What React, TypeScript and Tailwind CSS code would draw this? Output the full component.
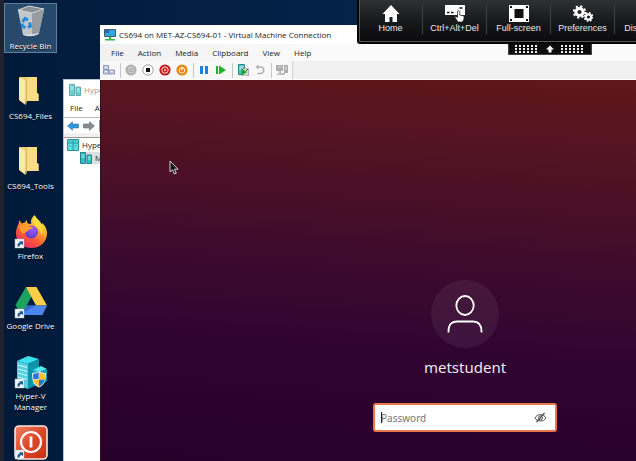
import type { ReactNode } from 'react';
import clsx from 'clsx';

/* Desktop icons */

const ShortcutArrow = () => (
  <g>
    <rect x="1" y="24" width="9" height="9" fill="#f5f8fb" stroke="#9fb0c0" strokeWidth=".5" />
    <path d="M3.400 31.600c-.2-2.600.9-4 2.700-4.300L5 26.200h4v4l-1.200-1.200c-1.400.2-2.300 1-2.200 2.600z" fill="#1d5a9c" />
  </g>
);

const RecycleBinIcon = () => (
  <svg viewBox="0 0 34 34" className="size-[34px]">
    <path d="M4 5 L9 29 Q15 32 21 30 L25 28 L30 5 L20 8z" fill="#a9adb2" />
    <path d="M4 5 L18 8 L18 31 Q12 31 9 29z" fill="#c4c7ca" />
    <path d="M18 8 L30 5 L25 28 L18 31z" fill="#979ca2" />
    <path d="M4 5 L15 1 L30 4 L18 8z" fill="#8b9096" stroke="#d5d8da" strokeWidth="1" strokeLinejoin="round" />
    <path d="M9 29 Q15 31 25 28 L25 29 Q17 33 9 30z" fill="#e1e3e5" />
    <g fill="none" stroke="#2389dc" strokeWidth="3">
      <path d="M8.500 17 L11 13.500 L14 15" />
      <path d="M15.500 17.500 L16.500 21 L14 22.500" />
      <path d="M11.500 22.500 L8.500 21.500 L8 18.500" />
    </g>
  </svg>
);

const FolderIcon = () => (
  <svg viewBox="0 0 34 34" className="size-[34px]">
    <path d="M6 2h17v16l1.500 1v7H6z" fill="#f4d67a" />
    <path d="M13 2h10v16l1.500 1v7H13z" fill="#f8dd86" />
    <path d="M5 2l6.500 3v25l-6.500-5z" fill="#fbe9a6" />
    <path d="M11.500 5v25l1.500-3V4z" fill="#dcb856" />
    <path d="M5 2h8v2l-1.500 1z" fill="#ecca69" />
  </svg>
);

const FirefoxIcon = () => (
  <svg viewBox="0 0 34 34" className="size-[34px]">
    <defs>
      <linearGradient id="fox" x1=".8" y1="0" x2=".2" y2="1">
        <stop offset="0" stopColor="#fff04a" />
        <stop offset=".35" stopColor="#ffb12c" />
        <stop offset=".65" stopColor="#ff5a37" />
        <stop offset="1" stopColor="#f0246d" />
      </linearGradient>
      <radialGradient id="globe" cx=".6" cy=".3" r=".8">
        <stop offset="0" stopColor="#a259f5" />
        <stop offset="1" stopColor="#4f3cc4" />
      </radialGradient>
    </defs>
    <path
      d="M20.500 0c1 3 4.500 4.500 6.500 8l1 1.500.5-1.500c3 3 4.500 7 4.500 10.500C33 27 26 33 17.500 33S2 27 2 18.500c0-3.500 1-7 2.500-9.500l1-4 2 3.500c1-.5 2-.8 3-.8l2-2.700c.5 2 1 3 2 4l3-.5C16 5 18.500 2 20.500 0z"
      fill="url(#fox)"
    />
    <path d="M21 .5c1 3 4 5 6 8.500 2 4 2 8 .5 12-1-7-4-8-7-11-2-2.500-1.500-6 .5-9.500z" fill="#ffdf3f" opacity=".85" />
    <circle cx="17.500" cy="17" r="6.500" fill="url(#globe)" />
    <path d="M6 11c3-1.500 7-1 9 .5l4 .5c-.5 2-3 2.500-5 3 0 2-3 2-4 4C7 18 5 15 6 11z" fill="#ff9a2b" />
    <ShortcutArrow />
  </svg>
);

const DriveIcon = () => (
  <svg viewBox="0 0 34 34" className="size-[34px]">
    <path d="M12 2 L17.500 11.500 L7.500 30 L1.500 20z" fill="#1ca261" />
    <path d="M12 2 H22.500 L33 20.500 H22z" fill="#fccd48" />
    <path d="M12.500 20.500 H33 L28.500 30 H7.500z" fill="#4a86ee" />
    <path d="M12.500 20.500 L22 20.500 L9 27.500z" fill="#3567c9" />
    <ShortcutArrow />
  </svg>
);

const HyperVIcon = () => (
  <svg viewBox="0 0 34 34" className="size-[34px]">
    <path d="M3 6 L14 1 L25 4 L14 9z" fill="#37e2ee" />
    <path d="M3 6 L14 9 V34 L3 30z" fill="#54cde0" />
    <path d="M14 9 L25 4 V29 L14 34z" fill="#0a93ab" />
    <g stroke="#d8f8fb" strokeWidth="1.200">
      <path d="M4 10l9 2.500M4 14l9 2.500M4 18l9 2.500M4 22l9 2.500" />
    </g>
    <path d="M19 15 L27 11 L33 14 L26 17z" fill="#58e6f2" />
    <path d="M19 15l7 2v14l-7-2z" fill="#17b5cc" />
    <path d="M26 17l7-3v12l-7 5z" fill="#0e9fb7" />
    <path d="M18 18c3 0 5-1 7-2 2 1 4 2 7 2 0 7-1 12-7 14.500C19 30 18 25 18 18z" fill="#dfe7ee" />
    <path d="M19 18.700c2.500 0 4.200-.7 5.600-1.500V24H19.300zM25 24.500h6c-.6 3-2.500 5.500-6 7z" fill="#2a76d2" />
    <path d="M25 17.200c1.600.8 3.500 1.500 6.200 1.500l-.2 5.800h-6zM19.300 24.500H25v7c-3-1.400-5-4-5.700-7z" fill="#fbc02b" />
    <ShortcutArrow />
  </svg>
);

const PowerIcon = () => (
  <svg viewBox="0 0 34 36" className="h-9 w-[34px]">
    <defs>
      <linearGradient id="power" x1="0" y1="0" x2="1" y2="1">
        <stop offset="0" stopColor="#f08465" />
        <stop offset=".5" stopColor="#dc4729" />
        <stop offset="1" stopColor="#c92f12" />
      </linearGradient>
    </defs>
    <rect x="1" y="1" width="32" height="33" rx="4" fill="url(#power)" stroke="#fbe7e0" strokeWidth="1.600" />
    <circle cx="17" cy="17" r="10" fill="none" stroke="#fff" strokeWidth="2.200" />
    <path d="M17 11.500v11" stroke="#fff" strokeWidth="2.800" />
    <g transform="translate(0 1)">
      <ShortcutArrow />
    </g>
  </svg>
);

interface Shortcut {
  label: string;
  icon: ReactNode;
  selected?: boolean;
}

const shortcuts: Shortcut[] = [
  { label: 'Recycle Bin', icon: <RecycleBinIcon />, selected: true },
  { label: 'CS694_Files', icon: <FolderIcon /> },
  { label: 'CS694_Tools', icon: <FolderIcon /> },
  { label: 'Firefox', icon: <FirefoxIcon /> },
  { label: 'Google Drive', icon: <DriveIcon /> },
  { label: 'Hyper-V Manager', icon: <HyperVIcon /> },
  { label: '', icon: <PowerIcon /> },
];

const DesktopShortcut = ({ label, icon, selected }: Shortcut) => (
  <li className="h-[70px]">
    <button
      type="button"
      aria-label={label || 'Power'}
      className={clsx(
        'flex w-full flex-col items-center gap-px border py-px text-[8px] leading-[11px] text-white',
        selected ? 'border-[#5b7d9f] bg-[#27496b]' : 'border-transparent'
      )}
    >
      {icon}
      {label && <span className="w-[52px] [text-shadow:0_1px_1px_#000]">{label}</span>}
    </button>
  </li>
);

/* Hyper-V Manager window, mostly hidden behind the connection */

const ServerIcon = ({ faded }: { faded?: boolean }) => (
  <svg viewBox="0 0 12 12" className={clsx('size-3 shrink-0', faded && 'opacity-70')}>
    <path d="M.5.5h5v11h-5zM7 3h4.500v8.500H7z" fill="#35bcc2" stroke="#1b8890" />
    <path d="M1.500 3h3M1.500 5h3M8 5h2.500M8 7h2.500" stroke="#a9eef0" />
  </svg>
);

const HostIcon = () => (
  <svg viewBox="0 0 12 12" className="size-3 shrink-0">
    <path d="M.5.5h11v11H.5z" fill="#5fdde0" stroke="#22969d" />
    <path d="M6 0v12M0 4h12" stroke="#22969d" />
    <path d="M2 2h3M7 2h3M2 7h3M7 7h3" stroke="#3bb4ba" />
  </svg>
);

const NavArrow = ({ className }: { className?: string }) => (
  <svg viewBox="0 0 12 10" className={clsx('h-2.5 w-3', className)}>
    <path d="M.5 5 5.500.7V3H11.500V7H5.500V9.300z" fill="currentColor" stroke="#55708a" strokeWidth=".6" />
  </svg>
);

const ManagerWindow = () => (
  <section className="absolute top-[79px] bottom-0 left-[63px] w-80 border-t border-l border-[#b9c3cd] bg-white text-[8px] text-[#1d1d1d]">
    <header className="flex h-[19px] items-center gap-[3px] pl-[5px] text-[#999]">
      <ServerIcon faded />
      <h2>Hyper-V Manager</h2>
    </header>
    <nav className="flex h-[18px] items-center gap-3 pl-1.5">
      <button type="button">File</button>
      <button type="button">Action</button>
    </nav>
    <div className="flex h-4 items-center gap-1 border-t border-[#bbb] pl-[3px]">
      <button type="button" aria-label="Back" className="text-[#259be8]"><NavArrow /></button>
      <button type="button" aria-label="Forward" className="text-[#8b8b8b]"><NavArrow className="rotate-180" /></button>
      <span className="h-3 w-px bg-[#999]" />
    </div>
    <div className="h-[5px] border-b border-[#999] bg-[#f0f0f0]" />
    <ul>
      <li className="flex h-[13px] items-center gap-[3px] pl-[3px]"><HostIcon />Hyper-V Manager</li>
      <li className="flex h-[13px] items-center pl-4">
        <span className="flex items-center gap-[3px] bg-[#dedede]"><ServerIcon />MET-AZ-CS694-01</span>
      </li>
    </ul>
  </section>
);

/* Virtual machine connection toolbar */

const ToolIcon = ({ label, children }: { label: string; children: ReactNode }) => (
  <button type="button" aria-label={label}>
    <svg viewBox="0 0 12 12" className="size-3">{children}</svg>
  </button>
);

const Divider = () => <span className="mr-1 ml-[5px] h-[15px] w-px bg-[#c6c6c6]" />;

const ToolGroup = ({ children }: { children: ReactNode }) => (
  <div className="flex items-center gap-[5px]">{children}</div>
);

const ConnectionToolbar = () => (
  <div className="flex h-[18px] bg-[#f0f0f0]">
    <div className="flex items-center border-r border-[#d2d2d2] bg-[#f8f8f8] pr-1 pl-[3px]">
      <ToolIcon label="Ctrl+Alt+Delete">
        <path d="M.5 1.500h5v4h-5zM.5 6h5v4h-5zM6 6h5.500v4H6z" fill="#c3cde2" stroke="#8c9ab5" />
        <path d="M2 3h2M2 7.500h2M7.500 7.500h2" stroke="#f2f5fb" />
      </ToolIcon>
      <Divider />
      <ToolGroup>
        <ToolIcon label="Start">
          <circle cx="6" cy="6" r="5.500" fill="#b0b0b0" />
          <circle cx="6" cy="6" r="3" fill="none" stroke="#cfcfcf" />
          <path d="M6 3.500v3" stroke="#dcdcdc" />
        </ToolIcon>
        <ToolIcon label="Turn Off">
          <circle cx="6" cy="6" r="5.200" fill="#fff" stroke="#8b8b8b" strokeWidth=".8" />
          <path d="M4 4h4v4H4z" fill="#111" />
        </ToolIcon>
        <ToolIcon label="Shut Down">
          <circle cx="6" cy="6" r="5.600" fill="#c81616" />
          <circle cx="6" cy="6" r="3.200" fill="none" stroke="#fff" strokeWidth=".9" />
          <path d="M6 4.800v2.400" stroke="#fff" strokeWidth="1.200" />
        </ToolIcon>
        <ToolIcon label="Save">
          <circle cx="6" cy="6" r="5.600" fill="#e88510" />
          <circle cx="6" cy="6.300" r="2.800" fill="none" stroke="#fff" strokeWidth=".9" />
          <path d="M6 2.800v3.400" stroke="#fff" strokeWidth="1.200" />
        </ToolIcon>
      </ToolGroup>
      <Divider />
      <ToolGroup>
        <ToolIcon label="Pause">
          <path d="M2 2h3v8H2zM7 2h3v8H7z" fill="#1d83e2" />
        </ToolIcon>
        <ToolIcon label="Reset">
          <path d="M1 2h2v8H1zM4 1.500 11 6 4 10.500z" fill="#16b52b" />
        </ToolIcon>
      </ToolGroup>
      <Divider />
      <ToolGroup>
        <ToolIcon label="Checkpoint">
          <path d="M1.500.5h6v10h-6z" fill="#5bc3c6" stroke="#26868b" />
          <path d="M2.500 3h4M2.500 5h4" stroke="#d9f7f7" />
          <path d="M5 4.500h6.500V12H5z" fill="#d6d6d6" stroke="#8c8c8c" strokeWidth=".6" />
          <path d="M4.500 4.500v7L10 8z" fill="#12a82a" />
          <path d="M9 7l2-2" stroke="#555" />
        </ToolIcon>
        <ToolIcon label="Revert">
          <path d="M3 3h3.500a3 3 0 0 1 0 6.500H3.500" fill="none" stroke="#b0b0b0" strokeWidth="1.600" />
          <path d="M4.500 .5v5L1.500 3z" fill="#b0b0b0" />
        </ToolIcon>
      </ToolGroup>
      <Divider />
      <ToolIcon label="Enhanced Session">
        <path d="M0 1h7v6H0zM8 1h4v8H8z" fill="#aeaeae" />
        <path d="M3 7h2v2h4v2H1V9.500h2z" fill="#bcbcbc" />
        <path d="M9 3h2M9 5h2M1.500 3h4" stroke="#ddd" />
      </ToolIcon>
    </div>
  </div>
);

const menus = ['File', 'Action', 'Media', 'Clipboard', 'View', 'Help'];

const LoginScreen = () => (
  <div className="flex flex-1 flex-col items-center border-l border-[#30101c] bg-linear-[184deg,#611817_0%,#571520_16%,#480f28_36%,#3a092f_54%,#300431_70%,#280028_100%] pt-[200px] font-['Noto_Sans',sans-serif]">
    <div className="flex size-[68px] items-center justify-center rounded-full bg-white/6">
      <svg viewBox="0 0 36 40" className="h-10 w-9" fill="none" stroke="#fff" strokeWidth="1.800" strokeLinecap="square">
        <ellipse cx="18" cy="11.500" rx="8.700" ry="9.500" />
        <path d="M1.500 37.500C1.500 29 6 27.500 10 27.500H26C30 27.500 34.500 29 34.500 37.500" />
      </svg>
    </div>
    <p className="mt-2 text-[15px] leading-[22px] text-[#eee8ee]">metstudent</p>
    <form className="relative mt-[25px] flex h-[29px] w-[184px] items-center rounded-[3px] border-2 border-[#e9764d] bg-white pr-2 pl-1.5">
      <input
        type="password"
        aria-label="Password"
        placeholder="Password"
        className="min-w-0 flex-1 text-[10px] leading-4 outline-none placeholder:text-[#777]"
      />
      <span className="absolute top-[7px] left-1.5 h-[11px] w-px bg-[#222]" />
      <button type="button" aria-label="Show password">
        <svg viewBox="0 0 13 11" className="h-[11px] w-[13px]" fill="none" stroke="#555">
          <path d="M1 6C3 1.500 10 1.500 12 6 10 10 3 10 1 6z" />
          <circle cx="6.500" cy="5.800" r="2" />
          <path d="M2.500 10 10.500 1" strokeWidth="1.300" />
        </svg>
      </button>
    </form>
  </div>
);

const ConnectionWindow = () => (
  <section className="absolute top-[25px] -right-[193px] bottom-0 left-[100px] flex flex-col bg-white text-[#1b1b1b]">
    <header className="flex h-[19px] items-center gap-[3px] pl-1">
      <svg viewBox="0 0 12 12" className="size-3">
        <path d="M.5.5h11v7H.5z" fill="#31a4e6" stroke="#4b5963" />
        <path d="M1 1h4v3H1z" fill="#1b6db2" />
        <path d="M5 8h2v2h4v1.500H1V10h4z" fill="#34b546" />
      </svg>
      <h1 className="text-[8px] leading-4">CS694 on MET-AZ-CS694-01 - Virtual Machine Connection</h1>
    </header>
    <nav className="flex h-[17px] items-center gap-3.5 bg-linear-to-r from-[#f1f1f1] to-[#fafafa] to-30% pl-[11px] text-[8px]">
      {menus.map(menu => (
        <button type="button" key={menu}>{menu}</button>
      ))}
    </nav>
    <ConnectionToolbar />
    <div className="h-px bg-white" />
    <LoginScreen />
  </section>
);

/* Remote session controls */

const actions = [
  {
    label: 'Home',
    icon: <path d="M10 0 1.500 9H4v8h4.500v-5h3v5H16V9h2.500z" />,
  },
  {
    label: 'Ctrl+Alt+Del',
    icon: (
      <>
        <path d="M0 0h20v10H0z" />
        <path d="M2 7.500h2.500M6 7.500h2.500M14.500 3h3" stroke="#111" strokeWidth="1.600" />
        <path d="M12.500 6.500c0-1.200 2.200-1.200 2.200 0V10l4.300 1v3l-1.500 3H13l-3-4.500 1-1 1.500 1z" stroke="#161616" strokeWidth=".7" />
      </>
    ),
  },
  {
    label: 'Full-screen',
    icon: (
      <>
        <path d="M0 0h20v17H0z" />
        <path d="M5.500 4h9v9h-9zM1 1h2v2H1zM17 1h2v2h-2zM1 14h2v2H1zM17 14h2v2h-2z" fill="#111" />
      </>
    ),
  },
  {
    label: 'Preferences',
    icon: (
      <>
        <circle cx="6.500" cy="7" r="3.600" fill="none" stroke="#fff" strokeWidth="3" />
        <circle cx="6.500" cy="7" r="5.700" fill="none" stroke="#fff" strokeWidth="2" strokeDasharray="2.240" />
        <circle cx="15.500" cy="12" r="2.700" fill="none" stroke="#fff" strokeWidth="2.200" />
        <circle cx="15.500" cy="12" r="4.200" fill="none" stroke="#fff" strokeWidth="1.500" strokeDasharray="1.650" />
      </>
    ),
  },
  { label: 'Disconnect', icon: <path d="M3 3l14 12M17 3 3 15" stroke="#fff" strokeWidth="3" /> },
];

const Grip = () => (
  <svg viewBox="0 0 24 8" className="h-2 w-6" stroke="#f2f2f2" strokeWidth="2" strokeDasharray="2">
    <path d="M0 1h24M0 4h24M0 7h24" />
  </svg>
);

const SessionBar = () => (
  <aside className="absolute top-0 right-0 left-[357px] flex flex-col items-start overflow-hidden">
    <div className="flex h-[44px] w-full rounded-bl-[3px] border-b-2 border-l-2 border-[#050505] bg-linear-to-b from-[#303133] via-[#18191b] to-[#0b0b0c] pt-1 font-['Liberation_Sans',sans-serif] text-[9px] leading-[11px] text-[#e8e8e8] shadow-[inset_1px_-1px_0_#555]">
      {actions.map(({ label, icon }) => (
        <button
          type="button"
          key={label}
          className="flex h-[30px] w-16 shrink-0 flex-col items-center gap-px border-r border-[#3e4043] pt-px"
        >
          <svg viewBox="0 0 20 17" className="h-[17px] w-5" fill="#fff">{icon}</svg>
          {label}
        </button>
      ))}
    </div>
    <button
      type="button"
      aria-label="Collapse"
      className="ml-[151px] flex h-[11px] w-[84px] items-center justify-center gap-[7px] border border-t-0 border-[#444] bg-[#0c0c0d]"
    >
      <Grip />
      <svg viewBox="0 0 8 8" className="size-2" fill="#fff">
        <path d="M4 .5 8 4.500H5.500v3h-3v-3H0z" />
      </svg>
      <Grip />
    </button>
  </aside>
);

export default function App() {
  return (
    <main className="relative h-screen overflow-hidden bg-linear-to-r from-[#011a3a] via-[#042248] to-[#06284e] font-['Open_Sans',sans-serif] select-none">
      <ul className="w-[58px] border-l-[4px] border-[#20222d] pt-[3px] pr-px">
        {shortcuts.map((item, i) => (
          <DesktopShortcut key={i} {...item} />
        ))}
      </ul>
      <ManagerWindow />
      <ConnectionWindow />
      <SessionBar />
      {/* Mouse pointer */}
      <svg viewBox="0 0 10 15" className="absolute top-[160px] left-[169px] h-[15px] w-2.5">
        <path d="M1 1v11l2.500-2.200L5.300 14l2-.9L5.500 9.200H9z" fill="#171717" stroke="#e8e8e8" strokeWidth=".9" />
      </svg>
    </main>
  );
}
